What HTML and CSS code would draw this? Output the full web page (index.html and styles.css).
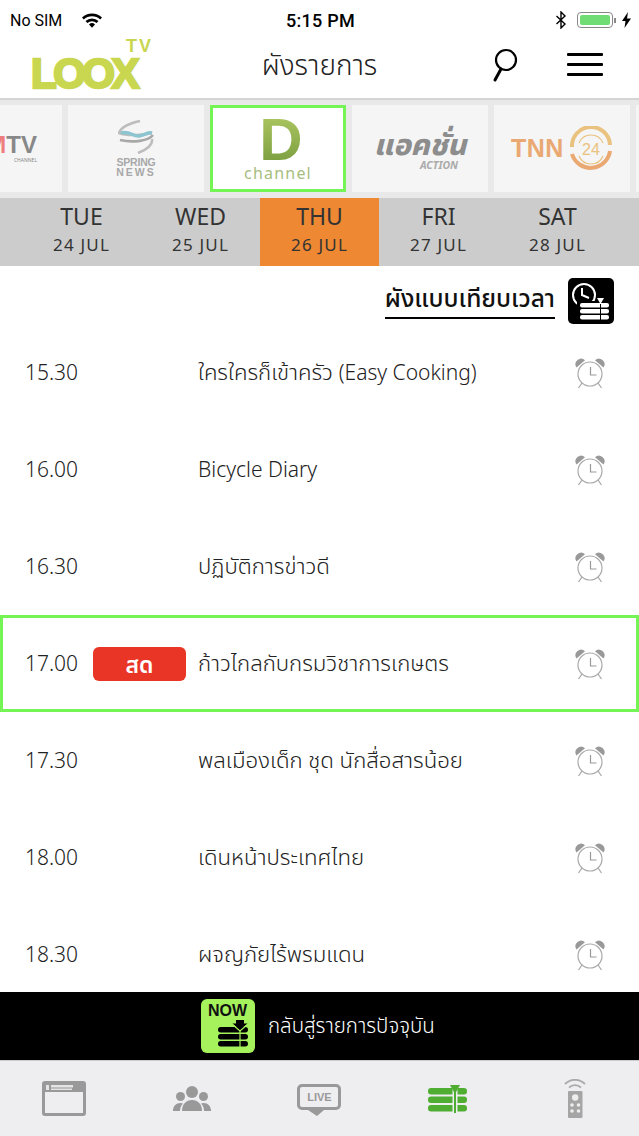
FILE: index.html
```html
<!DOCTYPE html>
<html lang="th">
<head>
    <meta charset="UTF-8">
    <meta name="viewport" content="width=device-width, initial-scale=1.0">
    <title>LOOX TV</title>
    <link rel="stylesheet" href="styles.css">
</head>
<body>
    <svg class="defs" width="0" height="0">
        <symbol id="alarm" viewBox="0 0 32 32">
            <path d="M2.500 10.500a5.600 5.600 0 0 1 8.500-7.200zM29.500 10.500a5.600 5.600 0 0 0-8.500-7.200z" fill="#999"/>
            <circle cx="16" cy="17" r="12" fill="none" stroke="#aaa" stroke-width="1.200"/>
            <path d="M16.500 10v8h6" fill="none" stroke="#999" stroke-width="1.200"/>
            <path d="M8 26l-3.500 5M24 26l3.500 5" stroke="#aaa" stroke-width="1.300"/>
        </symbol>
    </svg>

    <div class="status-bar">
        <div class="status-left">
            <span>No SIM</span>
            <svg class="wifi" width="22" height="16" viewBox="0 0 22 16">
                <path d="M1 5.500a14.500 14.500 0 0 1 20 0l-1.800 2a11.800 11.800 0 0 0-16.400 0z" fill="#000"/>
                <path d="M4.500 9a9.500 9.500 0 0 1 13 0l-1.900 2a6.800 6.800 0 0 0-9.200 0z" fill="#000"/>
                <path d="M8 12.400a4.300 4.300 0 0 1 6 0l-3 3.300z" fill="#000"/>
            </svg>
        </div>
        <div class="status-time">5:15 PM</div>
        <div class="status-right">
            <svg width="12" height="18" viewBox="0 0 12 18">
                <path d="M1.500 5l8.500 8-4 4V1l4 4-8.500 8" fill="none" stroke="#000" stroke-width="1.400"/>
            </svg>
            <div class="battery"><div class="battery-fill"></div></div>
            <div class="battery-tip"></div>
            <svg class="bolt" width="9" height="16" viewBox="0 0 9 16">
                <path d="M6 0L0 9h3.500L2.500 16 9 6.500H5z" fill="#000"/>
            </svg>
        </div>
    </div>

    <header class="top-bar">
        <div class="logo">
            <span class="logo-tv">TV</span>
            <span class="logo-text">LOOX</span>
        </div>
        <h1 class="page-title">ผังรายการ</h1>
        <svg class="search-icon" width="26" height="36" viewBox="0 0 26 36">
            <circle cx="14" cy="13" r="10" fill="none" stroke="#000" stroke-width="2.200"/>
            <path d="M9 22L3 33" stroke="#000" stroke-width="3" stroke-linecap="round"/>
        </svg>
        <div class="menu-icon"><span></span><span></span><span></span></div>
    </header>

    <div class="channels">
        <div class="channel channel-cut">
            <span class="mtv"><b>M</b>TV</span>
            <span class="mtv-sub">CHANNEL</span>
        </div>
        <div class="channel">
            <svg class="spring-logo" width="36" height="34" viewBox="0 0 36 34">
                <path d="M22 1C13 3 3 7 1 13c8 3 22 2 33 0" fill="none" stroke="#bdbdbd" stroke-width="2.600"/>
                <path d="M3 13c8-3 12 4 18 3s9-4 13-3" fill="none" stroke="#8cc5d0" stroke-width="3.500"/>
                <path d="M35 15c-4 6-20 8-33 5" fill="none" stroke="#a8a8a8" stroke-width="2.600"/>
                <path d="M34 19c1 6-6 11-14 14" fill="none" stroke="#bdbdbd" stroke-width="2.600"/>
            </svg>
            <span class="spring">SPRING</span>
            <span class="spring spring-news">NEWS</span>
        </div>
        <div class="channel channel-active">
            <span class="d-logo">D</span>
            <span class="d-sub">channel</span>
        </div>
        <div class="channel">
            <span class="action">แอคชั่น</span>
            <span class="action-sub">ACTION</span>
        </div>
        <div class="channel channel-row">
            <span class="tnn">TNN</span>
            <svg width="44" height="46" viewBox="0 0 44 46">
                <path d="M3 21A19 19 0 0 1 41 19" fill="none" stroke="#e9c27f" stroke-width="4"/>
                <path d="M41 25A19.500 19.500 0 0 1 3 28" fill="none" stroke="#eaa873" stroke-width="4"/>
                <path d="M10 17a13 13 0 0 1 24 0M10 30a13 13 0 0 0 24 0" fill="none" stroke="#e9c27f" stroke-width="1.200"/>
                <text x="22" y="29" text-anchor="middle" class="tnn-num">24</text>
            </svg>
        </div>
        <div class="channel channel-end"></div>
    </div>

    <nav class="days">
        <div class="day"><strong>TUE</strong><span>24 JUL</span></div>
        <div class="day"><strong>WED</strong><span>25 JUL</span></div>
        <div class="day day-active"><strong>THU</strong><span>26 JUL</span></div>
        <div class="day"><strong>FRI</strong><span>27 JUL</span></div>
        <div class="day"><strong>SAT</strong><span>28 JUL</span></div>
    </nav>

    <div class="compare-row">
        <span class="compare-link">ผังแบบเทียบเวลา</span>
        <svg class="compare-icon" width="46" height="46" viewBox="0 0 46 46">
            <rect width="46" height="46" rx="5" fill="#000"/>
            <circle cx="16" cy="17" r="11" fill="none" stroke="#fff" stroke-width="2"/>
            <path d="M14 10v7l7 3" fill="none" stroke="#fff" stroke-width="2"/>
            <rect x="9" y="23" width="34" height="17" fill="#000"/>
            <rect x="12" y="25" width="29" height="4.500" rx="2" fill="#fff"/>
            <rect x="12" y="31" width="29" height="4.500" rx="2" fill="#fff"/>
            <rect x="12" y="37" width="29" height="4.500" rx="2" fill="#fff"/>
            <path d="M29 20h7l-3.500 6z" fill="#fff"/>
            <path d="M32.500 26v16" stroke="#000"/>
        </svg>
    </div>

    <main class="schedule">
        <div class="row">
            <span class="time">15.30</span>
            <span class="name">ใครใครก็เข้าครัว <span class="latin">(Easy Cooking)</span></span>
            <svg class="alarm"><use href="#alarm"/></svg>
        </div>
        <div class="row">
            <span class="time">16.00</span>
            <span class="name name-latin">Bicycle Diary</span>
            <svg class="alarm"><use href="#alarm"/></svg>
        </div>
        <div class="row">
            <span class="time">16.30</span>
            <span class="name">ปฏิบัติการข่าวดี</span>
            <svg class="alarm"><use href="#alarm"/></svg>
        </div>
        <div class="row row-live">
            <span class="time">17.00</span>
            <span class="live-badge">สด</span>
            <span class="name">ก้าวไกลกับกรมวิชาการเกษตร</span>
            <svg class="alarm"><use href="#alarm"/></svg>
        </div>
        <div class="row">
            <span class="time">17.30</span>
            <span class="name">พลเมืองเด็ก ชุด นักสื่อสารน้อย</span>
            <svg class="alarm"><use href="#alarm"/></svg>
        </div>
        <div class="row">
            <span class="time">18.00</span>
            <span class="name">เดินหน้าประเทศไทย</span>
            <svg class="alarm"><use href="#alarm"/></svg>
        </div>
        <div class="row">
            <span class="time">18.30</span>
            <span class="name">ผจญภัยไร้พรมแดน</span>
            <svg class="alarm"><use href="#alarm"/></svg>
        </div>
    </main>

    <div class="now-bar">
        <div class="now-badge">
            <span>NOW</span>
            <svg width="30" height="27" viewBox="0 0 30 27">
                <path d="M18 0h8v3.500h3.500L22 10l-7.500-6.500H18z" fill="#000"/>
                <rect x="0" y="7" width="30" height="5.500" rx="2.700" fill="#000"/>
                <rect x="0" y="14" width="30" height="5.500" rx="2.700" fill="#000"/>
                <rect x="0" y="21" width="30" height="5.500" rx="2.700" fill="#000"/>
                <path d="M22 11v16" stroke="#a5f25c" stroke-width="1.200"/>
                <path d="M15 5l7 6 7-6" fill="none" stroke="#a5f25c" stroke-width="1.200"/>
            </svg>
        </div>
        <span class="now-text">กลับสู่รายการปัจจุบัน</span>
    </div>

    <nav class="tab-bar">
        <div class="tab">
            <svg width="44" height="35" viewBox="0 0 44 35">
                <rect x="1.500" y="1.500" width="41" height="32" rx="1.500" fill="#eeedf0" stroke="#999" stroke-width="3"/>
                <path d="M1.500 3h41v8h-41z" fill="#999"/>
                <path d="M4 4h3v5H4zM9 4h22v2.500H9zM9 7.500h21V9H9z" fill="#e4e4e4"/>
            </svg>
        </div>
        <div class="tab">
            <svg width="38" height="25" viewBox="0 0 38 25">
                <circle cx="19" cy="6" r="6" fill="#999"/>
                <circle cx="7.500" cy="10.500" r="4.500" fill="#999"/>
                <circle cx="30.500" cy="10.500" r="4.500" fill="#999"/>
                <path d="M9 25c0-7 4-11 10-11s10 4 10 11z" fill="#999"/>
                <path d="M0 25c0-5 3-8 7.500-8 1 0 2 .2 2.500.5C8 19.500 7 22 7 25zM38 25c0-5-3-8-7.500-8-1 0-2 .2-2.500.5 2 2 3 4.500 3 7.500z" fill="#999"/>
            </svg>
        </div>
        <div class="tab">
            <div class="live-icon">LIVE</div>
        </div>
        <div class="tab">
            <svg width="39" height="28" viewBox="0 0 39 28">
                <rect x="0" y="3" width="39" height="6.500" rx="3" fill="#4fae32"/>
                <rect x="0" y="11.500" width="39" height="6.500" rx="3" fill="#4fae32"/>
                <rect x="0" y="20" width="39" height="6.500" rx="3" fill="#4fae32"/>
                <path d="M27 3v25" stroke="#eeedf0" stroke-width="5"/>
                <path d="M27 7v21" stroke="#4fae32" stroke-width="2"/>
                <path d="M22 0h10l-5 9z" fill="#4fae32"/>
            </svg>
        </div>
        <div class="tab">
            <svg width="22" height="39" viewBox="0 0 22 39">
                <path d="M1 5a14 14 0 0 1 20 0M5 8.500a9 9 0 0 1 12 0" fill="none" stroke="#aaa" stroke-width="1.800"/>
                <rect x="4" y="12" width="14.500" height="27" rx="1" fill="#a5a5a5"/>
                <circle cx="11.200" cy="18.500" r="3.200" fill="#eee"/>
                <circle cx="8" cy="26" r="1.800" fill="#eee"/>
                <circle cx="14.500" cy="26" r="1.800" fill="#eee"/>
                <circle cx="8" cy="32" r="1.800" fill="#eee"/>
                <circle cx="14.500" cy="32" r="1.800" fill="#eee"/>
            </svg>
        </div>
    </nav>
</body>
</html>
```

FILE: styles.css
```css
/* page */
body {
    margin: 0;
    width: 639px;
    height: 1136px;
    overflow: hidden;
    display: flex;
    flex-direction: column;
    background-color: #ffffff;
    color: #222;
    font-family: "Noto Sans", "Noto Sans Thai", "DejaVu Sans", sans-serif;
}
.defs {
    position: absolute;
}

/* status bar */
.status-bar {
    height: 40px;
    flex: none;
    padding: 0 8px 0 10px;
    display: grid;
    grid-template-columns: 1fr auto 1fr;
    align-items: center;
    font-family: Roboto, "Liberation Sans", sans-serif;
    font-size: 16px;
    color: #000;
    box-sizing: border-box;
}
.status-left {
    display: flex;
    align-items: center;
    gap: 19px;
}
.status-time {
    font-size: 18px;
    font-weight: 500;
    letter-spacing: 0.300px;
}
.status-right {
    display: flex;
    align-items: center;
    justify-content: flex-end;
}
.battery {
    width: 36px;
    height: 16px;
    margin-left: 10px;
    padding: 2px;
    box-sizing: border-box;
    border: 1px solid #888;
    border-radius: 4px;
}
.battery-fill {
    height: 100%;
    background-color: #70dd74;
    border-radius: 2px;
}
.battery-tip {
    width: 2px;
    height: 5px;
    margin-left: 1px;
    background-color: #888;
}
.bolt {
    margin-left: 6px;
}

/* header */
.top-bar {
    height: 60px;
    flex: none;
    position: relative;
    box-sizing: border-box;
    padding-bottom: 5px;
    border-bottom: 2px solid #d4d4d4;
    display: flex;
    align-items: center;
}
.logo {
    position: absolute;
    left: 31px;
    top: 0;
    width: 124px;
    height: 53px;
    color: #c9d650;
    font-family: "Liberation Sans", sans-serif;
    font-weight: bold;
}
.logo-text {
    position: absolute;
    left: 0;
    top: 16px;
    font-size: 42px;
    line-height: 36px;
    letter-spacing: -3.500px;
    -webkit-text-stroke: 2.500px #c9d650;
}
.logo-tv {
    position: absolute;
    right: 2px;
    top: 0;
    font-size: 18px;
    line-height: 13px;
    letter-spacing: 2px;
}
.page-title {
    margin: 0;
    width: 100%;
    text-align: center;
    font-size: 28px;
    font-weight: 350;
    color: #222;
}
.search-icon {
    position: absolute;
    left: 492px;
    top: 7px;
}
.menu-icon {
    position: absolute;
    left: 567px;
    top: 13px;
    width: 36px;
    height: 23px;
    display: flex;
    flex-direction: column;
    justify-content: space-between;
}
.menu-icon span {
    height: 3px;
    background-color: #000;
    border-radius: 1px;
}

/* channels */
.channels {
    height: 98px;
    flex: none;
    box-sizing: border-box;
    padding: 5px 0 6px;
    display: flex;
    gap: 6px;
    background-color: #e9e9e9;
}
.channel {
    width: 136px;
    flex: none;
    box-sizing: border-box;
    background-color: #f5f5f5;
    display: flex;
    flex-direction: column;
    align-items: center;
    justify-content: center;
    overflow: hidden;
}
.channel-cut {
    width: 62px;
    align-items: flex-end;
    padding-right: 25px;
}
.channel-end {
    width: 3px;
}
.channel-row {
    flex-direction: row;
    gap: 5px;
}
.channel-active {
    background-color: #ffffff;
    border: 3px solid #75f555;
}
.mtv {
    font-family: "Liberation Sans", sans-serif;
    font-size: 24px;
    font-weight: bold;
    line-height: 24px;
    color: #888;
}
.mtv b {
    color: #ee7d7d;
}
.mtv-sub {
    font-size: 5px;
    line-height: 7px;
    color: #888;
}
.spring-logo {
    margin-bottom: 3px;
}
.spring {
    font-family: "Liberation Sans", sans-serif;
    font-size: 10.500px;
    font-weight: bold;
    line-height: 10px;
    letter-spacing: -0.200px;
    color: #a8a8a8;
}
.spring-news {
    letter-spacing: 2px;
}
.d-logo {
    margin-left: 6px;
    font-family: "Liberation Sans", sans-serif;
    font-size: 60px;
    line-height: 46px;
    font-weight: bold;
    background: linear-gradient(#a9c45f, #7c9f40);
    -webkit-background-clip: text;
    background-clip: text;
    color: transparent;
}
.d-sub {
    margin-top: 2px;
    font-size: 16px;
    line-height: 16px;
    letter-spacing: 1.200px;
    color: #a7bd80;
}
.action {
    font-size: 29px;
    line-height: 33px;
    font-weight: 800;
    font-style: italic;
    color: #8d8d8d;
}
.action-sub {
    margin-left: 38px;
    font-size: 10.500px;
    line-height: 10px;
    font-weight: bold;
    font-style: italic;
    color: #aaa;
}
.tnn {
    font-family: "Liberation Sans", sans-serif;
    font-size: 25px;
    font-weight: bold;
    letter-spacing: 0.500px;
    color: #eaa873;
}
.tnn-num {
    font-family: "Liberation Sans", sans-serif;
    font-size: 16px;
    fill: #e9c27f;
}

/* days */
.days {
    height: 68px;
    flex: none;
    padding: 0 22px;
    display: flex;
    background-color: #cccccc;
}
.day {
    width: 119px;
    padding-bottom: 3px;
    box-sizing: border-box;
    display: flex;
    flex-direction: column;
    align-items: center;
    justify-content: center;
    color: #333;
}
.day strong {
    font-size: 23px;
    line-height: 28px;
    font-weight: 400;
}
.day span {
    font-size: 17px;
    line-height: 30px;
    letter-spacing: 1.200px;
}
.day-active {
    background-color: #ee8833;
}

/* compare link */
.compare-row {
    height: 58px;
    flex: none;
    box-sizing: border-box;
    padding: 12px 25px 0 0;
    display: flex;
    align-items: flex-start;
    justify-content: flex-end;
    gap: 13px;
}
.compare-link {
    border-bottom: 2px solid #000;
    font-size: 24.500px;
    line-height: 39px;
    font-weight: 500;
    color: #111;
}
.compare-icon {
    flex: none;
}

/* schedule */
.schedule {
    flex: 1;
    overflow: hidden;
}
.row {
    height: 97px;
    box-sizing: border-box;
    padding: 0 33px 0 25px;
    display: flex;
    align-items: center;
    font-size: 21px;
    font-weight: 350;
    color: #222;
}
.row-live {
    border: 3px solid #75f555;
    padding: 0 30px 0 22px;
}
.time {
    width: 68px;
    flex: none;
    margin-bottom: 2px;
}
.live-badge {
    width: 93px;
    height: 34px;
    flex: none;
    margin-right: 12px;
    border-radius: 6px;
    background-color: #e93525;
    color: #ffffff;
    text-align: center;
    font-size: 23px;
    line-height: 34px;
    font-weight: 600;
}
.name {
    flex: 1;
    padding-left: 105px;
    font-size: 22.200px;
}
.row-live .name {
    padding-left: 0;
}
.latin {
    font-size: 21px;
}
.name-latin {
    margin-bottom: 2px;
    font-size: 21px;
}
.alarm {
    width: 32px;
    height: 32px;
    flex: none;
}

/* now bar */
.now-bar {
    height: 68px;
    flex: none;
    box-sizing: border-box;
    display: flex;
    align-items: center;
    padding-left: 201px;
    gap: 13px;
    background-color: #000;
}
.now-badge {
    width: 54px;
    height: 54px;
    box-sizing: border-box;
    padding: 3px 0 0 17px;
    border-radius: 6px;
    background-color: #a5f25c;
    display: flex;
    flex-direction: column;
    align-items: flex-start;
}
.now-badge span {
    margin-left: -10px;
    font-family: "Liberation Sans", sans-serif;
    font-size: 16px;
    line-height: 18px;
    font-weight: bold;
    color: #111;
}
.now-text {
    font-size: 20.500px;
    font-weight: 350;
    color: #fff;
}

/* tabs */
.tab-bar {
    height: 76px;
    flex: none;
    box-sizing: border-box;
    border-top: 1px solid #ccc;
    display: flex;
    background-color: #eeedf0;
}
.tab {
    flex: 1;
    display: flex;
    align-items: center;
    justify-content: center;
}
.live-icon {
    position: relative;
    width: 44px;
    height: 26px;
    margin-bottom: 4px;
    box-sizing: border-box;
    border: 3px solid #999;
    border-radius: 5px;
    text-align: center;
    font-family: "Liberation Sans", sans-serif;
    font-size: 11px;
    line-height: 20px;
    font-weight: bold;
    color: #999;
}
.live-icon::after {
    content: "";
    position: absolute;
    left: 8px;
    top: 23px;
    border-top: 6px solid #999;
    border-left: 9px solid transparent;
    border-right: 7px solid transparent;
}
```
